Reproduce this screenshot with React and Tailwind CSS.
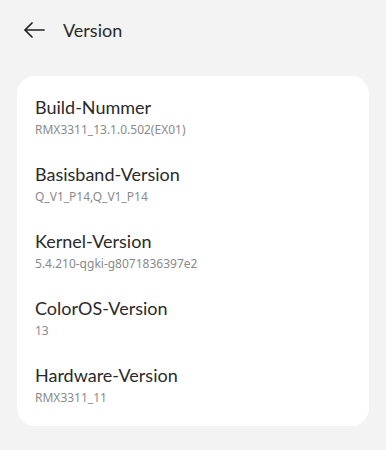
import React from 'react';

const items = [
  { title: 'Build-Nummer', value: 'RMX3311_13.1.0.502(EX01)' },
  { title: 'Basisband-Version', value: 'Q_V1_P14,Q_V1_P14' },
  { title: 'Kernel-Version', value: '5.4.210-qgki-g8071836397e2' },
  { title: 'ColorOS-Version', value: '13' },
  { title: 'Hardware-Version', value: 'RMX3311_11' },
];

export default function App() {
  return (
    <div className="min-h-[450px] w-full bg-[#f3f3f3] font-['Noto_Sans',sans-serif]">
      {/* Top bar */}
      <header className="flex h-[60px] items-center pl-[24px]">
        <svg width="21" height="16" viewBox="0 0 21 16" fill="none" stroke="#1f1f1f" strokeWidth="1.7" strokeLinecap="round" strokeLinejoin="round">
          <path d="M20 8H1.5" />
          <path d="M8 1L1 8l7 7" />
        </svg>
        <h1 className="ml-[18px] font-['Lato',sans-serif] text-[18px] leading-[24px] text-[#2a2a2a]">Version</h1>
      </header>

      {/* Info card */}
      <div className="mx-[17px] mt-[16px] rounded-[18px] bg-white px-[18px] pt-[19px] pb-[20px]">
        <div className="flex flex-col gap-[24px]">
          {items.map((it) => (
            <div key={it.title} className="flex flex-col gap-[3px]">
              <div className="font-['Lato',sans-serif] text-[18px] leading-[24px] text-[#2a2a2a]">{it.title}</div>
              <div className="text-[12px] leading-[16px] text-[#8a8a8a]">{it.value}</div>
            </div>
          ))}
        </div>
      </div>
    </div>
  );
}
